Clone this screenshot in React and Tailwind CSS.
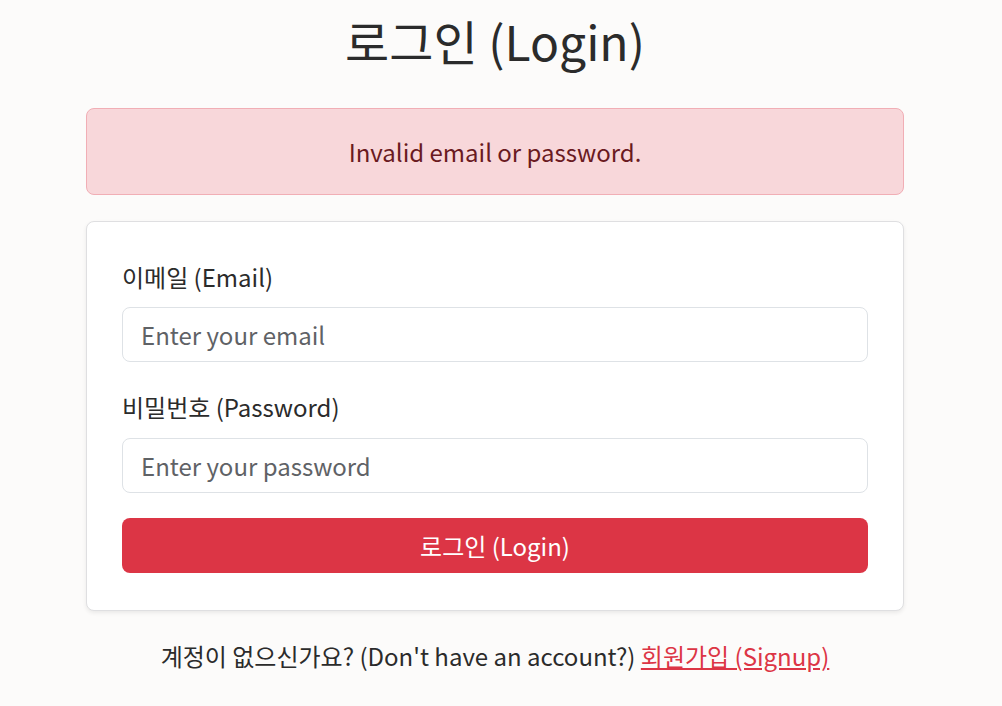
import React from "react";

export default function App() {
  const font = { fontFamily: '"Noto Sans CJK KR", "Noto Sans", sans-serif' };
  return (
    <div className="min-h-[706px] bg-[#fcfbfa] text-[#212529]" style={font}>
      <div className="ml-[86px] w-[818px] pt-[11px]">
        <h1 className="text-center text-[48px] leading-[58px] font-normal text-[#2b2b2b]">
          로그인 (Login)
        </h1>
        <div className="mt-[39px] h-[87px] rounded-[8px] border border-[#f1aeb5] bg-[#f8d7da] flex items-center justify-center text-[24px] text-[#6a1a21]">
          Invalid email or password.
        </div>
        <div className="mt-[26px] rounded-[8px] border border-[#dfdfe1] bg-white px-[35px] pt-[37px] pb-[37px] shadow-[0_2px_4px_rgba(0,0,0,0.075)]">
          <label className="block text-[24px] leading-[36px] mb-[12px] text-[#2b2b2b]">이메일 (Email)</label>
          <input
            type="email"
            placeholder="Enter your email"
            className="block w-full h-[55px] rounded-[8px] border border-[#dee2e6] bg-white px-[18px] text-[24px] text-[#212529] placeholder:text-[#5f6266] outline-none"
            style={font}
          />
          <label className="block text-[24px] leading-[36px] mt-[27px] mb-[13px] text-[#2b2b2b]">비밀번호 (Password)</label>
          <input
            type="password"
            placeholder="Enter your password"
            className="block w-full h-[55px] rounded-[8px] border border-[#dee2e6] bg-white px-[18px] text-[24px] text-[#212529] placeholder:text-[#5f6266] outline-none"
            style={font}
          />
          <button
            className="mt-[25px] block w-full h-[55px] rounded-[8px] bg-[#dc3545] text-white text-[24px]"
            style={font}
          >
            로그인 (Login)
          </button>
        </div>
        <p className="mt-[27px] text-center text-[24px] leading-[36px] text-[#2b2b2b]">
          계정이 없으신가요? (Don't have an account?){" "}
          <a href="#" className="text-[#dc3545] underline">회원가입 (Signup)</a>
        </p>
      </div>
    </div>
  );
}
